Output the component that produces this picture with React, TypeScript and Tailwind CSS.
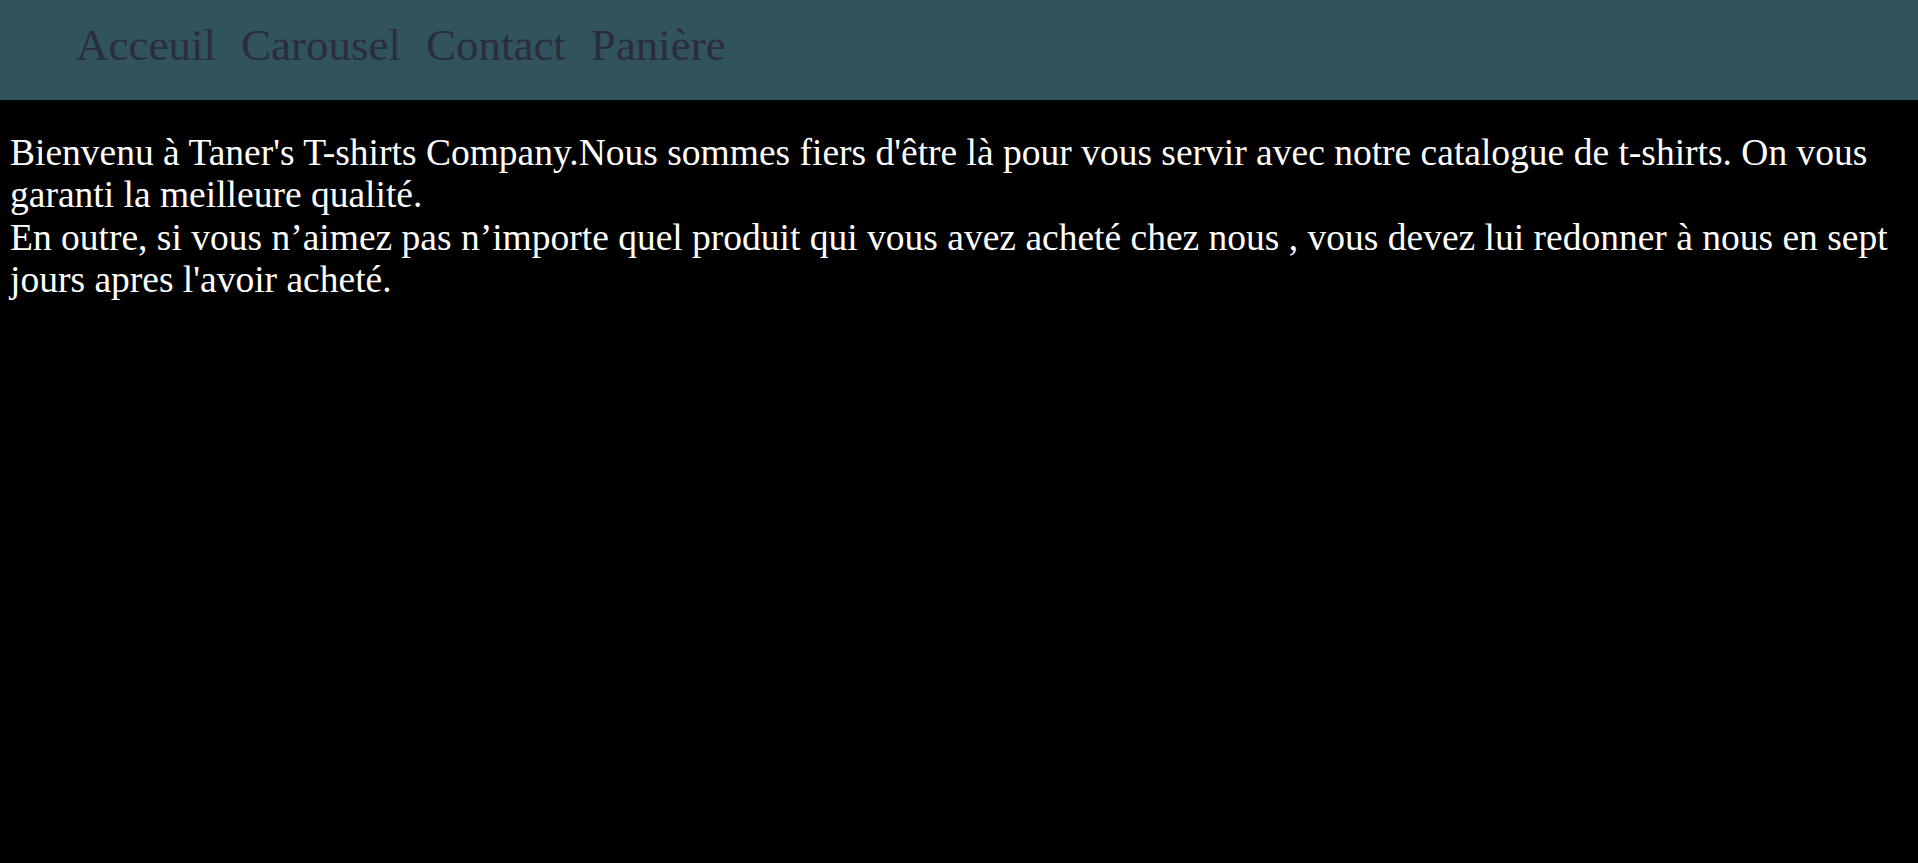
import React from 'react';

const links = ['Acceuil', 'Carousel', 'Contact', 'Panière'];

const App: React.FC = () => {
  return (
    <div className="min-h-[863px] bg-black font-['Liberation_Serif',_'Times_New_Roman',_serif]">
      {/* Barre de navigation */}
      <nav className="h-[100px] bg-[#30535d] pl-[76px] pt-[20px]">
        <ul className="flex gap-[25px]">
          {links.map((l) => (
            <li key={l}>
              <a href="#" className="text-[45px] leading-[1.15] text-[#2b2d3a]">
                {l}
              </a>
            </li>
          ))}
        </ul>
      </nav>

      <div className="px-[10px] pt-[32px] text-[37.5px] leading-[42.3px] text-white">
        <p>
          Bienvenu à Taner's T-shirts Company.Nous sommes fiers d'être là pour vous servir avec notre catalogue de t-shirts. On vous garanti la meilleure qualité.
        </p>
        <p>
          En outre, si vous n’aimez pas n’importe quel produit qui vous avez acheté chez nous , vous devez lui redonner à nous en sept jours apres l'avoir acheté.
        </p>
      </div>
    </div>
  );
};

export default App;
